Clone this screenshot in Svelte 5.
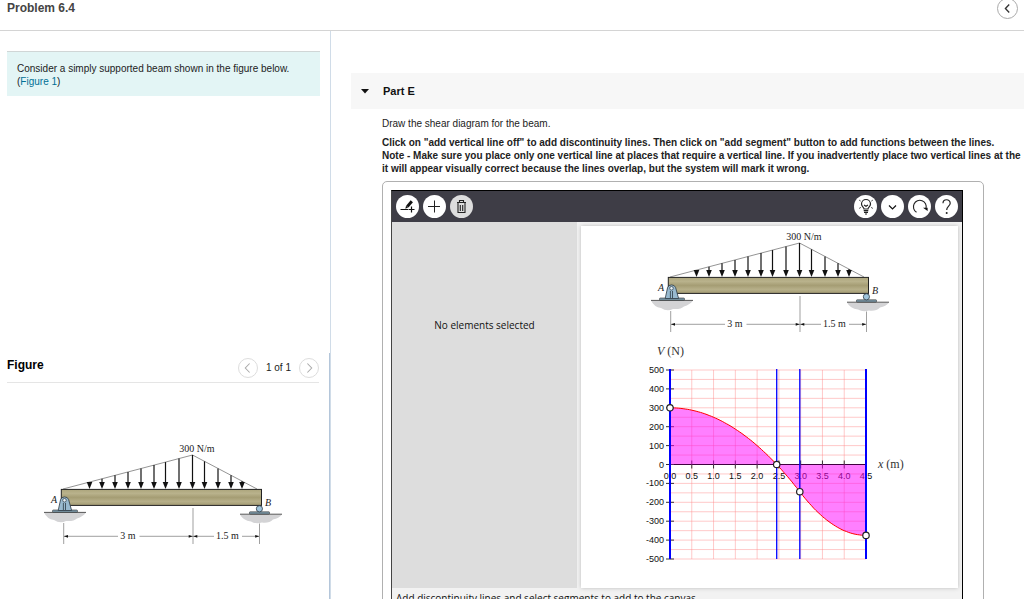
<script lang="ts">
	// --- Beam sketch: load arrows --------------------------------------------
	const peak = { x: 149.5, y: 15 };
	const arrows = [46.5, 59, 72, 85, 98, 111, 122.5, 136, 149.5, 161.5, 175, 188, 199];

	// Height of the triangular load outline at a given x
	function loadTop(x: number) {
		if (x <= peak.x) return 49 - ((x - 20) / (peak.x - 20)) * (49 - peak.y);
		return peak.y + ((x - peak.x) / (214 - peak.x)) * (49 - peak.y);
	}

	// --- Shear diagram -------------------------------------------------------
	const xMax = 4.5;
	const vMax = 500;
	const plot = { left: 30, right: 226, top: 30, bottom: 219 };

	const sx = (x: number) => plot.left + (x / xMax) * (plot.right - plot.left);
	const sy = (v: number) => plot.top + ((vMax - v) / (2 * vMax)) * (plot.bottom - plot.top);

	const xTicks = Array.from({ length: 10 }, (_, i) => i * 0.5);
	const vTicks = Array.from({ length: 11 }, (_, i) => 500 - i * 100);
	const vGrid = Array.from({ length: 21 }, (_, i) => 500 - i * 50);

	function shear(x: number) {
		return x <= 3 ? 300 - 50 * x * x : -375 + 100 * (xMax - x) ** 2;
	}

	const samples = Array.from({ length: 91 }, (_, i) => i * 0.05);
	const curve = samples
		.map((x, i) => `${i === 0 ? 'M' : 'L'}${sx(x).toFixed(1)},${sy(shear(x)).toFixed(1)}`)
		.join(' ');
	const area = `${curve} L${sx(xMax)},${sy(0)} L${sx(0)},${sy(0)} Z`;

	const innerLines = [2.45, 2.98];
	const nodes = [0, 2.45, 2.98, 4.5];
</script>

{#snippet beam()}
	<svg class="beam" viewBox="0 0 240 108" role="img" aria-label="Simply supported beam with a triangular load">
		<defs>
			<linearGradient id="wood" x1="0" y1="0" x2="0" y2="1">
				<stop offset="0" stop-color="#aca57c" />
				<stop offset="0.25" stop-color="#b9b28c" />
				<stop offset="0.5" stop-color="#a59d74" />
				<stop offset="0.75" stop-color="#b6af89" />
				<stop offset="1" stop-color="#a39b73" />
			</linearGradient>
		</defs>

		<path d="M20,49 L{peak.x},{peak.y} L214,49" fill="none" stroke="#666" stroke-width="0.7" />
		{#each arrows as x (x)}
			<line x1={x} x2={x} y1={loadTop(x)} y2="44" stroke="#111" stroke-width="1.2" />
			<path d="M{x - 2.8},42 h5.6 l-2.8,7 z" fill="#111" />
		{/each}

		<path d="M1,72.5 h42 q-3,4 -9,6 q-3,3 -11,2.5 q-6,3 -12,-1 q-7,-1 -10,-7.5 z" fill="#d3d3d5" />
		<path d="M197,74.5 h42 q-3,4 -9,5 q-4,4 -11,3 q-6,2 -11,-1 q-8,-1 -11,-7 z" fill="#d3d3d5" />
		<rect x="18.3" y="49.4" width="200.2" height="16" fill="url(#wood)" stroke="#222" stroke-width="1" />
		<path d="M1,72.4 h42 M197,74.2 h42" stroke="#444" stroke-width="0.9" />

		<rect x="9.5" y="70" width="25" height="2.3" rx="0.8" fill="#7b98a8" stroke="#333" stroke-width="0.6" />
		<path d="M15.2,70.5 L17.6,59.5 Q18.5,56.9 21.6,56.9 Q24.6,56.9 25.6,59.5 L28.6,70.5 Z" fill="#98b9cf" stroke="#2d3a44" stroke-width="0.8" />
		<path d="M20.4,63 v7 M22.5,63 v7" stroke="#2d3a44" stroke-width="0.8" />
		<circle cx="21.5" cy="60.3" r="1.8" fill="#e8f0f5" stroke="#2d3a44" stroke-width="0.7" />
		<rect x="206.5" y="71.8" width="20" height="2.3" rx="0.6" fill="#7b98a8" stroke="#333" stroke-width="0.6" />
		<circle cx="216.4" cy="68.8" r="3.1" fill="#9fc4dc" stroke="#2d3a44" stroke-width="0.8" />

		<path
			d="M20.7,83 V104 M150,68 V104 M216.5,83.5 V104 M21,96.3 H75 M96.5,96.3 H171 M199,96.3 H216"
			fill="none"
			stroke="#777"
			stroke-width="0.7"
		/>
		<path
			d="M21,96.3 l4,-1.4 v2.8 z M149.7,96.3 l-4,-1.4 v2.8 z M150.3,96.3 l4,-1.4 v2.8 z M216.2,96.3 l-4,-1.4 v2.8 z"
			fill="#111"
		/>
		<text x="154" y="12" text-anchor="middle">300 N/m</text>
		<text x="8" y="63" class="italic">A</text>
		<text x="222" y="66" class="italic">B</text>
		<text x="85" y="99" text-anchor="middle">3 m</text>
		<text x="184.5" y="99" text-anchor="middle">1.5 m</text>
	</svg>
{/snippet}

<div class="page">
	<header class="top-bar">
		<h1>Problem 6.4</h1>
		<button class="round back" aria-label="Back">
			<svg viewBox="0 0 20 20"><path d="M11.8,5.8 L7.8,10 L11.8,14.2" stroke="#333" stroke-width="1.4" /></svg>
		</button>
	</header>

	<div class="columns">
		<aside class="side">
			<section class="intro">
				<p class="prompt">
					Consider a simply supported beam shown in the figure below.<br />
					(<a href="#figure">Figure 1</a>)
				</p>
			</section>

			<section class="figure" id="figure">
				<div class="figure-head">
					<h2>Figure</h2>
					<nav class="pager" aria-label="Figures">
						<button class="round" aria-label="Previous figure">
							<svg viewBox="0 0 20 20"><path d="M11.8,5 L7,10 L11.8,15" stroke="#aaa" stroke-width="1.2" /></svg>
						</button>
						<span>1 of 1</span>
						<button class="round" aria-label="Next figure">
							<svg viewBox="0 0 20 20"><path d="M8.2,5 L13,10 L8.2,15" stroke="#aaa" stroke-width="1.2" /></svg>
						</button>
					</nav>
				</div>
				<div class="figure-body">{@render beam()}</div>
			</section>
		</aside>

		<main class="work">
			<button class="part-head" aria-expanded="true">
				<svg viewBox="0 0 8 5"><path d="M0,0 H8 L4,4.6 Z" fill="#111" /></svg>
				<span>Part E</span>
			</button>

			<div class="part-body">
				<p>Draw the shear diagram for the beam.</p>
				<p class="note">
					Click on "add vertical line off" to add discontinuity lines. Then click on "add segment" button to add functions between the lines.<br />
					Note - Make sure you place only one vertical line at places that require a vertical line. If you inadvertently place two vertical lines at the<br />
					it will appear visually correct because the lines overlap, but the system will mark it wrong.
				</p>

				<div class="answer">
					<div class="tool">
						<div class="toolbar">
							<button aria-label="Add segment">
								<svg viewBox="0 0 23 23">
									<path d="M4.5,14.5 H12 M12.5,14.5 h6 M15.5,11.5 v6" stroke="#111" stroke-width="1.2" />
									<path d="M11.3,11.6 L15.8,6.3" stroke="#111" stroke-width="3" />
									<path d="M9.3,13.8 l0.8,-3 l2,1.8 z" fill="#111" />
								</svg>
							</button>
							<button aria-label="Add vertical line">
								<svg viewBox="0 0 23 23"><path d="M5,11.5 h12 M11.5,5.5 v12" stroke="#222" stroke-width="1" /></svg>
							</button>
							<button class="muted" aria-label="Delete">
								<svg viewBox="0 0 23 23">
									<path d="M7,7.5 h9 M9.5,7 v-1.5 h4 v1.5 M8,8 v9.5 h7 v-9.5 M10.3,10 v6 M12.7,10 v6" stroke="#222" stroke-width="1.1" />
								</svg>
							</button>
							<span class="spacer"></span>
							<button aria-label="Hint">
								<svg viewBox="0 0 23 23">
									<path d="M10,14 C10,12.5 7.5,11.6 7.5,9 A4.5,4.5 0 0 1 16.5,9 C16.5,11.6 14,12.5 14,14 Z M9.7,15.7 h4.6 M10,17.4 h4 M11,19 h2 M10,10 l2,1.2 l2,-1.2" stroke="#222" stroke-width="1.2" />
									<path d="M5,5 l1.8,1.2 M19,5 l-1.8,1.2 M5,13.5 l2,-1.2 M19,13.5 l-2,-1.2" stroke="#555" stroke-width="0.9" />
								</svg>
							</button>
							<button aria-label="More">
								<svg viewBox="0 0 23 23"><path d="M8,10.5 L11.5,14 L15,10.5" stroke="#111" stroke-width="1.2" /></svg>
							</button>
							<button aria-label="Reset">
								<svg viewBox="0 0 23 23">
									<path d="M8.5,17.2 A6.4,6.4 0 1 1 18,13.4" stroke="#222" stroke-width="1.1" />
									<path d="M15,12.8 h4.6 v3.2 z" fill="#111" />
								</svg>
							</button>
							<button aria-label="Help">
								<svg viewBox="0 0 23 23">
									<path d="M8,8.3 C8,3.6 15.2,3.6 15.2,8.2 C15.2,11 11.7,11.4 11.7,15" stroke="#222" stroke-width="1.2" />
									<circle cx="11.7" cy="18" r="1" fill="#222" />
								</svg>
							</button>
						</div>

						<div class="stage">
							<div class="selection">No elements selected</div>
							<div class="canvas">
								{@render beam()}
								<svg class="chart" viewBox="0 0 280 230" role="img" aria-label="Shear diagram">
									<text x="17" y="15" class="axis-title"><tspan class="italic">V</tspan> (N)</text>
									<text x="238" y="128" class="axis-title"><tspan class="italic">x</tspan> (m)</text>

									<!-- Grid -->
									{#each xTicks as x (x)}
										<line x1={sx(x)} x2={sx(x)} y1={plot.top} y2={plot.bottom} class="grid" />
									{/each}
									{#each vGrid as v (v)}
										<line x1={plot.left} x2={plot.right} y1={sy(v)} y2={sy(v)} class="grid" />
									{/each}

									<!-- Axes -->
									<line x1={plot.left} x2={plot.right} y1={sy(0)} y2={sy(0)} stroke="#000" />
									{#each vTicks as v (v)}
										<line x1={plot.left - 4} x2={plot.left + 4} y1={sy(v)} y2={sy(v)} stroke="#333" />
										<text x="24" y={sy(v) + 3} text-anchor="end" class="tick">{v}</text>
									{/each}
									{#each xTicks as x (x)}
										<line x1={sx(x)} x2={sx(x)} y1={sy(0) - 4} y2={sy(0) + 4} stroke="#333" />
										<text x={sx(x)} y={sy(0) + 14} text-anchor="middle" class="tick">{x.toFixed(1)}</text>
									{/each}

									<!-- Shear curve -->
									<path d={area} fill="#f0f" fill-opacity="0.5" />
									<path d={curve} fill="none" stroke="#f00" stroke-width="1" />

									<!-- Discontinuity lines -->
									<line x1={sx(0)} x2={sx(0)} y1={plot.top - 1} y2={plot.bottom} stroke="#00f" stroke-width="2" />
									<line x1={sx(xMax)} x2={sx(xMax)} y1={plot.top - 1} y2={plot.bottom} stroke="#00f" stroke-width="2" />
									{#each innerLines as x (x)}
										<line x1={sx(x)} x2={sx(x)} y1={plot.top - 1} y2={plot.bottom} stroke="#00f" stroke-width="1.3" />
									{/each}
									{#each nodes as x (x)}
										<circle cx={sx(x)} cy={sy(shear(x))} r="3.2" fill="#fff" stroke="#222" stroke-width="1.2" />
									{/each}
								</svg>
							</div>
						</div>

						<div class="status">Add discontinuity lines and select segments to add to the canvas.</div>
					</div>
				</div>
			</div>
		</main>
	</div>
</div>

<style>
	:global(body) {
		background: #fff;
	}
	.page {
		display: flex;
		flex-direction: column;
		height: 100vh;
		overflow: hidden;
		font-family: 'Liberation Sans', Arial, sans-serif;
		font-size: 10px;
		line-height: 13px;
		color: #222;
	}
	h1,
	h2,
	p {
		margin: 0;
	}
	button {
		padding: 0;
		border: 0;
		font: inherit;
		color: inherit;
		cursor: pointer;
	}
	svg {
		display: block;
		flex: none;
	}
	button svg {
		fill: none;
	}

	.top-bar {
		display: flex;
		justify-content: space-between;
		flex: none;
		height: 30px;
		padding: 0 6px 0 7px;
		border-bottom: 1px solid #d4d4d4;
	}
	h1 {
		font-size: 12px;
		line-height: 16px;
		color: #444;
	}
	.round {
		width: 20px;
		height: 20px;
		box-sizing: border-box;
		border: 1px solid #ddd;
		border-radius: 50%;
		background: #fff;
	}
	.round svg {
		width: 18px;
		height: 18px;
	}
	.back {
		width: 21px;
		height: 21px;
		margin-top: -2px;
		border-color: #aaa;
	}
	.back svg {
		width: 19px;
		height: 19px;
	}

	.columns {
		display: flex;
		flex: 1;
		min-height: 0;
	}
	.side {
		display: flex;
		flex-direction: column;
		flex: none;
		width: 330px;
		border-right: 1px solid #d0dce8;
	}
	.intro {
		flex: 1;
		padding: 20px 10px 0 7px;
	}
	.prompt {
		padding: 10px 10px 8px;
		border-top: 1px solid #d0d6d6;
		background: #e3f5f5;
		white-space: nowrap;
	}
	a {
		color: #007096;
		text-decoration: none;
	}
	.figure {
		height: 246px;
		padding: 0 10px 0 7px;
		border-right: 1px solid #b4c6da;
	}
	.figure-head {
		display: flex;
		justify-content: space-between;
		height: 29px;
		border-bottom: 1px solid #e5e5e5;
	}
	h2 {
		font-size: 12px;
		line-height: 24px;
		color: #000;
	}
	.pager {
		display: flex;
		align-items: center;
		gap: 8px;
	}
	.figure-body {
		padding: 57px 0 0 36px;
	}

	.beam {
		width: 240px;
		height: 108px;
	}
	.beam text {
		font-family: 'Liberation Serif', 'Times New Roman', serif;
		font-size: 10px;
		fill: #222;
	}
	.italic {
		font-style: italic;
	}

	.work {
		flex: 1;
		min-width: 0;
		padding: 42px 0 0 20px;
	}
	.part-head {
		display: flex;
		align-items: center;
		gap: 14px;
		width: 100%;
		height: 36px;
		padding-left: 10px;
		background: #f7f7f7;
		font-size: 11px;
		font-weight: 700;
		color: #111;
	}
	.part-head svg {
		width: 8px;
		height: 5px;
	}
	.part-body {
		padding: 8px 40px 0 31px;
	}
	.part-body p {
		margin-bottom: 6px;
		white-space: nowrap;
	}
	.note {
		font-weight: 700;
	}

	.answer {
		padding: 8px 20px 8px 8px;
		border: 1px solid #b0b0b0;
		border-radius: 5px;
	}
	.tool {
		border: 1px solid #000;
		border-left-color: #444;
		background: #f2f2f2;
		font-family: 'Open Sans', 'Noto Sans', sans-serif;
		color: #111;
	}
	.toolbar {
		display: flex;
		align-items: center;
		gap: 4px;
		height: 31px;
		padding: 0 4px;
		background: #3e3d46;
	}
	.toolbar button {
		width: 23px;
		height: 23px;
		border-radius: 50%;
		background: #fff;
	}
	.toolbar .muted {
		background: #ddd;
	}
	.toolbar svg {
		width: 23px;
		height: 23px;
	}
	.spacer {
		flex: 1;
	}
	.stage {
		display: flex;
		gap: 4px;
		padding-right: 4px;
	}
	.selection {
		width: 185px;
		padding-top: 97px;
		box-sizing: border-box;
		background: #ddd;
		text-align: center;
	}
	.canvas {
		display: flex;
		flex: 1;
		flex-direction: column;
		gap: 4px;
		margin-top: 4px;
		padding: 2px 0 18px 69px;
		background: #fff;
		box-shadow: 0 0 4px #bbb;
	}
	.chart {
		width: 280px;
		height: 230px;
		margin-left: -10px;
	}
	.grid {
		stroke: #f88;
		stroke-opacity: 0.45;
	}
	.tick {
		font-family: 'Liberation Sans', Arial, sans-serif;
		font-size: 9px;
		fill: #111;
	}
	.axis-title {
		font-family: 'Liberation Serif', 'Times New Roman', serif;
		font-size: 12px;
		fill: #333;
	}
	.status {
		padding: 4px;
	}
</style>
